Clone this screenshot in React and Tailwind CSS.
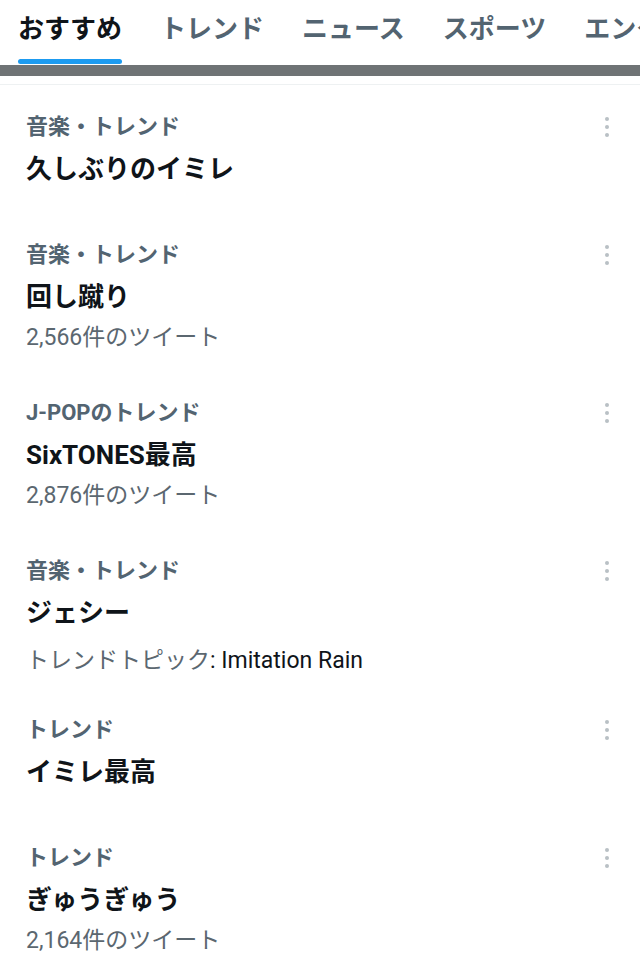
import React from "react";

const FONT = { fontFamily: 'Roboto, "Noto Sans CJK JP", sans-serif' };

const tabs = ["おすすめ", "トレンド", "ニュース", "スポーツ", "エンタメ"];

const items = [
  { cat: "音楽・トレンド", title: "久しぶりのイミレ", pb: "pb-[30px]" },
  { cat: "音楽・トレンド", title: "回し蹴り", count: "2,566件のツイート", pb: "pb-[20px]" },
  { cat: "J-POPのトレンド", title: "SixTONES最高", count: "2,876件のツイート", pb: "pb-[20px]" },
  { cat: "音楽・トレンド", title: "ジェシー", topic: true, pb: "pb-[14px]" },
  { cat: "トレンド", title: "イミレ最高", pb: "pb-[30px]" },
  { cat: "トレンド", title: "ぎゅうぎゅう", count: "2,164件のツイート", pb: "pb-[20px]" },
];

function Dots() {
  return (
    <div className="flex flex-col items-center gap-[4px] pt-[4px]">
      <span className="block w-[4px] h-[4px] rounded-full bg-[#b9c0c5]" />
      <span className="block w-[4px] h-[4px] rounded-full bg-[#b9c0c5]" />
      <span className="block w-[4px] h-[4px] rounded-full bg-[#b9c0c5]" />
    </div>
  );
}

export default function App() {
  return (
    <div className="w-[640px] h-[980px] bg-white overflow-hidden" style={FONT}>
      <div className="flex gap-[38px] pl-[18px] h-[65px] whitespace-nowrap overflow-hidden">
        {tabs.map((t, i) => (
          <div key={t} className="flex flex-col shrink-0">
            <div
              className={
                "h-[59px] flex items-center pb-[1px] text-[26px] font-bold leading-none " +
                (i === 0 ? "text-[#0f1419]" : "text-[#536471]")
              }
            >
              {t}
            </div>
            {i === 0 ? (
              <div className="h-[5px] rounded-full bg-[#1d9bf0]" />
            ) : null}
          </div>
        ))}
      </div>
      <div className="h-[11px] bg-[#6f7375]" />
      <div className="h-[8px] bg-white" />
      <div className="h-[1px] bg-[#eef1f2]" />
      <div className="flex flex-col">
        {items.map((it, i) => (
          <div key={i} className={"flex pl-[26px] pr-[28px] pt-[28px] " + it.pb}>
            <div className="flex-1 flex flex-col">
              <div className="h-[28px] flex items-center text-[22px] font-bold text-[#536471] leading-none">
                {it.cat}
              </div>
              <div className="mt-[14px] h-[28px] flex items-center text-[26px] font-bold text-[#0f1419] leading-none">
                {it.title}
              </div>
              {it.count ? (
                <div className="mt-[12px] h-[28px] flex items-center text-[23px] text-[#5b6770] leading-none">
                  {it.count}
                </div>
              ) : null}
              {it.topic ? (
                <div className="mt-[19px] h-[28px] flex items-center text-[23px] leading-none">
                  <span className="text-[#5b6770]">トレンドトピック</span>
                  <span className="text-[#0f1419]">: Imitation Rain</span>
                </div>
              ) : null}
            </div>
            <div className="w-[10px] flex justify-center">
              <Dots />
            </div>
          </div>
        ))}
      </div>
    </div>
  );
}
